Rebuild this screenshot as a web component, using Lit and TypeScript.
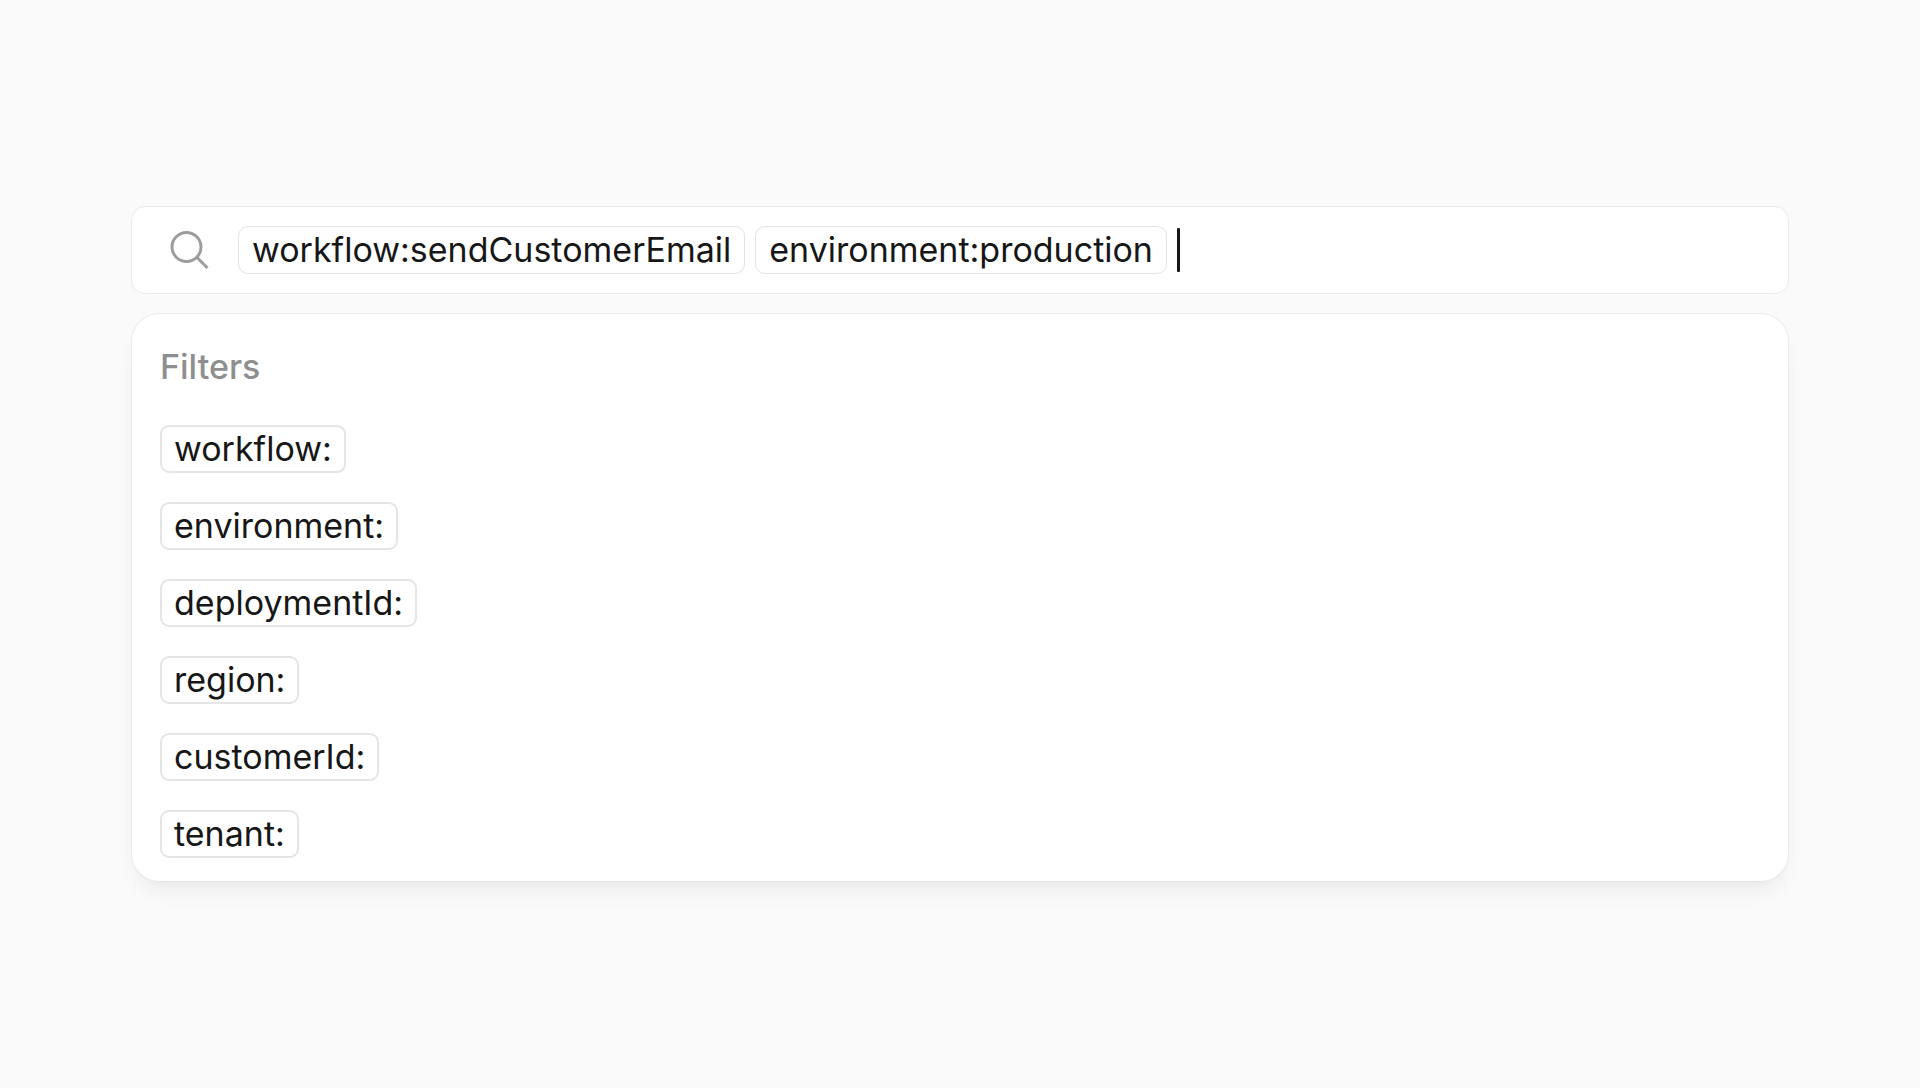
import { LitElement, html, css } from "lit";
import { customElement, state } from "lit/decorators.js";

@customElement("app-root")
export class AppRoot extends LitElement {
  static styles = css`
    :host {
      display: block;
      box-sizing: border-box;
      min-height: 100vh;
      padding: 206px 131px;
      background: #fafafa;
      color: #171717;
      font-family: Inter, "Liberation Sans", sans-serif;
      font-size: 34px;
      line-height: 46px;
    }
    *,
    *::before {
      box-sizing: border-box;
    }
    .finder {
      display: flex;
      flex-direction: column;
      gap: 19px;
    }
    .search {
      display: flex;
      align-items: center;
      gap: 10px;
      min-height: 88px;
      padding: 0 28px 0 38px;
      border: 1px solid #ebebeb;
      border-radius: 14px;
      background: #fff;
      cursor: text;
    }
    .icon {
      flex: none;
      width: 40px;
      height: 40px;
      margin-right: 18px;
      color: #9c9c9c;
    }
    .chip {
      display: block;
      flex: none;
      height: 48px;
      margin: 0;
      padding: 0 13px;
      border: 1px solid #e2e2e2;
      border-radius: 10px;
      background: #fff;
      color: inherit;
      font: inherit;
      white-space: nowrap;
    }
    .entry {
      display: flex;
      flex: 1;
      align-items: center;
      min-width: 0;
    }
    .entry::before {
      content: "";
      flex: none;
      width: 3px;
      height: 44px;
      border-radius: 1px;
      background: #171717;
    }
    .input {
      flex: 1;
      min-width: 0;
      height: 44px;
      padding: 0;
      border: 0;
      outline: 0;
      background: transparent;
      color: inherit;
      font: inherit;
      caret-color: transparent;
    }
    .panel {
      padding: 30px 28px 23px;
      border: 1px solid #ebebeb;
      border-bottom-color: #e6e6e6;
      border-radius: 28px;
      background: #fff;
      box-shadow: 0 16px 24px -8px rgba(0, 0, 0, 0.06),
        0 4px 8px -4px rgba(0, 0, 0, 0.04);
    }
    .title {
      margin: 0 0 35px;
      color: #8f8f8f;
      font-size: 34px;
      font-weight: 500;
      line-height: 46px;
    }
    .list {
      display: flex;
      flex-direction: column;
      align-items: flex-start;
      gap: 29px;
      margin: 0;
      padding: 0;
      list-style: none;
    }
    .option {
      padding: 0 12px;
      border: 2px solid #e5e5e5;
      border-radius: 9px;
      line-height: 44px;
      cursor: pointer;
    }
  `;

  @state() private tokens = [
    "workflow:sendCustomerEmail",
    "environment:production",
  ];
  @state() private text = "";

  private filters = [
    "workflow:",
    "environment:",
    "deploymentId:",
    "region:",
    "customerId:",
    "tenant:",
  ];

  private onInput(e: Event) {
    this.text = (e.target as HTMLInputElement).value;
  }

  render() {
    return html`
      <main class="finder">
        <label class="search" for="query">
          <svg class="icon" viewBox="0 0 40 40" fill="none" aria-hidden="true">
            <circle cx="16.5" cy="17" r="14.5" stroke="currentColor" stroke-width="3" />
            <path d="M26.8 27.3 37.5 38" stroke="currentColor" stroke-width="3" />
          </svg>
          ${this.tokens.map((t) => html`<span class="chip">${t}</span>`)}
          <span class="entry">
            <input
              id="query"
              class="input"
              type="text"
              autocomplete="off"
              aria-labelledby="filters-title"
              .value=${this.text}
              @input=${this.onInput}
            />
          </span>
        </label>
        <section class="panel" aria-labelledby="filters-title">
          <h2 id="filters-title" class="title">Filters</h2>
          <ul class="list">
            ${this.filters.map(
              (f) => html`<li>
                <button class="chip option" type="button" @click=${() => (this.text = f)}>
                  ${f}
                </button>
              </li>`
            )}
          </ul>
        </section>
      </main>
    `;
  }
}
